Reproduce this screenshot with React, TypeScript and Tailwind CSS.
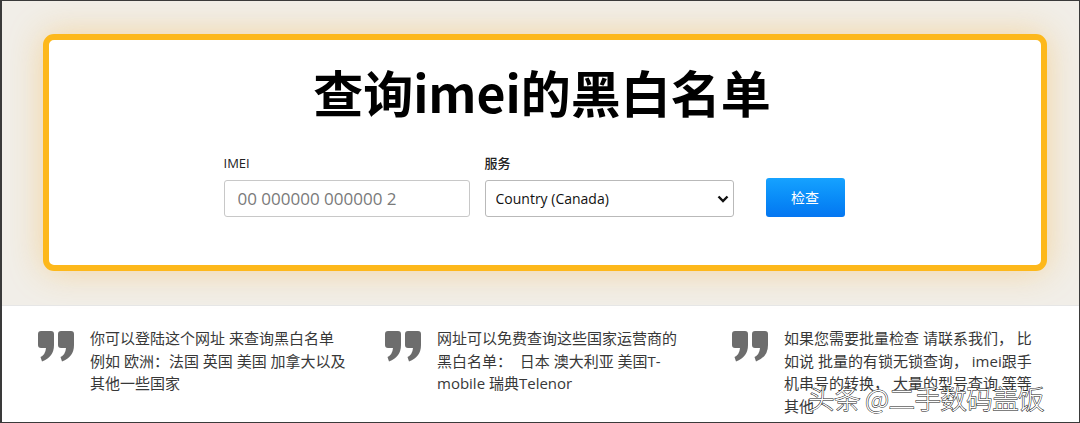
import React from "react"

const quotes = [
  ["你可以登陆这个网址 来查询黑白名单", "例如 欧洲：法国 英国 美国 加拿大以及", "其他一些国家"],
  ["网址可以免费查询这些国家运营商的", "黑白名单：  日本 澳大利亚 美国T-", "mobile 瑞典Telenor"],
  ["如果您需要批量检查 请联系我们， 比", "如说 批量的有锁无锁查询， imei跟手", "机串号的转换， 大量的型号查询 等等", "其他"]
]

function QuoteIcon() {
  return (
    <svg width="36" height="31" viewBox="0 0 36 31" className="shrink-0 mt-[4px]">
      <path
        d="M3 0H13Q16 0 16 3V14Q16 26 4 30.5L2.5 26Q7.5 23.5 8 17H3Q0 17 0 14V3Q0 0 3 0Z"
        fill="#6d6d6d"
      />
      <path
        d="M23 0H33Q36 0 36 3V14Q36 26 24 30.5L22.5 26Q27.5 23.5 28 17H23Q20 17 20 14V3Q20 0 23 0Z"
        fill="#6d6d6d"
      />
    </svg>
  )
}

export default function App() {
  return (
    <div
      className="relative w-[1080px] h-[423px] overflow-hidden border border-l-2 border-[#3a3a3a] bg-white"
      style={{ fontFamily: '"Open Sans", "Noto Sans CJK SC", sans-serif' }}
    >
      {/* top area with card */}
      <div className="bg-[#f1eee8] pt-[33px] pl-[41px] pr-[32px] pb-[34px]">
        <div className="h-[237px] rounded-[11px] border-[6px] border-[#fdb81b] bg-white pt-[20px] shadow-[0_0_34px_rgba(248,170,40,0.38)]">
          <h1
            className="text-center text-[50px] leading-[62px] font-bold text-black pr-[6px]"
            style={{ fontFamily: '"Noto Sans CJK SC", "Open Sans", sans-serif' }}
          >
            查询imei的黑白名单
          </h1>

          <div className="mt-[32px] flex items-end justify-center pr-[22px]">
            <div className="flex flex-col">
              <label className="text-[13px] leading-[18px] font-medium text-[#222]">IMEI</label>
              <input
                className="mt-[8px] h-[37px] w-[246px] rounded-[3px] border border-[#c8c8c8] px-[13px] text-[17px] text-[#333] placeholder:text-[#7a7a7a] outline-none"
                placeholder="00 000000 000000 2"
              />
            </div>
            <div className="ml-[15px] flex flex-col">
              <label className="text-[13px] leading-[18px] font-medium text-[#222]">服务</label>
              <div className="relative mt-[8px]">
                <select className="h-[37px] w-[249px] appearance-none rounded-[3px] border border-[#b9b9b9] bg-white pl-[10px] text-[14px] text-[#111] outline-none">
                  <option>Country (Canada)</option>
                </select>
                <svg
                  width="12"
                  height="8"
                  viewBox="0 0 12 8"
                  className="pointer-events-none absolute right-[5px] top-[15px]"
                >
                  <path d="M1.5 1.5L6 6L10.5 1.5" stroke="#111" strokeWidth="2.4" fill="none" />
                </svg>
              </div>
            </div>
            <button className="ml-[32px] h-[39px] w-[79px] rounded-[3px] bg-gradient-to-b from-[#16a2ff] to-[#0576f1] text-[14px] text-white">
              检查
            </button>
          </div>
        </div>
      </div>

      {/* quotes */}
      <div className="flex border-t border-[#e6e6e6] pl-[36px] pt-[21px]">
        {quotes.map((lines, i) => (
          <div key={i} className="flex w-[348.5px] gap-[16px]">
            <QuoteIcon />
            <p className="text-[15px] leading-[22.5px] text-[#383838] whitespace-pre">
              {lines.map((l, j) => (
                <span key={j} className="block">
                  {l}
                </span>
              ))}
            </p>
          </div>
        ))}
      </div>

      {/* watermark */}
      <div
        className="absolute left-[806px] top-[377px] text-[26.5px] leading-[40px] tracking-[-0.6px] text-white"
        style={{
          fontFamily: '"Noto Sans CJK SC", sans-serif',
          fontWeight: 300,
          WebkitTextStroke: "1px #111",
          paintOrder: "stroke fill"
        }}
      >
        头条 @二手数码盖饭
      </div>
    </div>
  )
}
